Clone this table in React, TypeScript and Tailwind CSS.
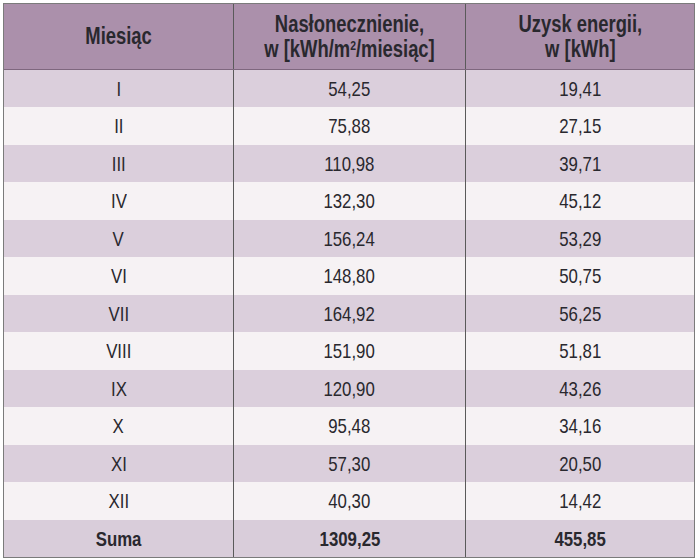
const rows: [string, string, string][] = [
  ["I", "54,25", "19,41"],
  ["II", "75,88", "27,15"],
  ["III", "110,98", "39,71"],
  ["IV", "132,30", "45,12"],
  ["V", "156,24", "53,29"],
  ["VI", "148,80", "50,75"],
  ["VII", "164,92", "56,25"],
  ["VIII", "151,90", "51,81"],
  ["IX", "120,90", "43,26"],
  ["X", "95,48", "34,16"],
  ["XI", "57,30", "20,50"],
  ["XII", "40,30", "14,42"],
];

const cols = "grid grid-cols-[230px_232px_1fr]";

function Cell({ children, last }: { children: React.ReactNode; last?: boolean }) {
  return (
    <div className={`flex items-center justify-center ${last ? "" : "border-r-[1.5px] border-[#5a5a5a]"}`}>
      <span className="inline-block whitespace-nowrap text-center scale-x-[0.8]">{children}</span>
    </div>
  );
}

export default function App() {
  return (
    <div className="w-[700px] h-[560px] bg-white pt-[3px] pl-[3px] font-['Liberation_Sans','Arial',sans-serif] text-[#29282e]">
      <div className="w-[692px] h-[555px] border-[1.5px] border-[#7b7b7b] flex flex-col">
        {/* Naglowek */}
        <div className={`${cols} h-[66px] bg-[#ab90ab] border-b border-[#7e677e] font-bold text-[23px] leading-[25px]`}>
          <Cell>Miesiąc</Cell>
          <Cell>
            Nasłonecznienie,
            <br />
            w [kWh/m<span className="relative -top-[7px] text-[13px] leading-none">2</span>/miesiąc]
          </Cell>
          <Cell last>
            Uzysk energii,
            <br />
            w [kWh]
          </Cell>
        </div>

        {rows.map(([m, n, u], i) => (
          <div
            key={m}
            className={`${cols} flex-1 text-[21px] ${i % 2 === 0 ? "bg-[#dbcfdc]" : "bg-[#f6f2f4]"}`}
          >
            <Cell>{m}</Cell>
            <Cell>{n}</Cell>
            <Cell last>{u}</Cell>
          </div>
        ))}

        {/* Suma */}
        <div className={`${cols} flex-1 text-[21px] font-bold bg-[#d9cdda]`}>
          <Cell>Suma</Cell>
          <Cell>1309,25</Cell>
          <Cell last>455,85</Cell>
        </div>
      </div>
    </div>
  );
}
